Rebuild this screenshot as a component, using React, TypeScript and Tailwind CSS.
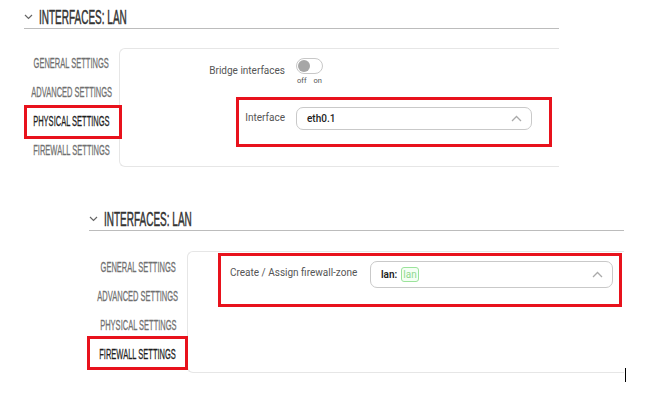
const condensed = { fontFamily: '"Liberation Sans", Arial, sans-serif' };

function Chevron() {
  return (
    <svg width="9" height="6" viewBox="0 0 9 6" className="shrink-0">
      <path d="M1 1l3.5 3.5L8 1" fill="none" stroke="#666" strokeWidth="1.2" />
    </svg>
  );
}

function CaretUp() {
  return (
    <svg width="11" height="7" viewBox="0 0 11 7">
      <path d="M1 6l4.5-4.5L10 6" fill="none" stroke="#aaa" strokeWidth="1.3" />
    </svg>
  );
}

function Title() {
  return (
    <div className="flex items-center gap-[6px] h-[23px] border-b border-[#bcbcbc]">
      <Chevron />
      <span
        className="inline-block origin-left scale-x-[0.5] text-[20px] leading-none text-[#333] whitespace-nowrap [-webkit-text-stroke:0.5px_#333]"
        style={condensed}
      >
        INTERFACES: LAN
      </span>
    </div>
  );
}

const tabs = ["GENERAL SETTINGS", "ADVANCED SETTINGS", "PHYSICAL SETTINGS", "FIREWALL SETTINGS"];

function SideTab({ label, active, boxClass }: { label: string; active: boolean; boxClass: string }) {
  return (
    <div className="relative h-[29px] flex items-center justify-center">
      <span
        className={`inline-block scale-x-[0.5] text-[15px] leading-none whitespace-nowrap ${
          active ? "text-[#1e1e1e] [-webkit-text-stroke:0.3px_#1e1e1e]" : "text-[#707070] [-webkit-text-stroke:0.3px_#707070]"
        }`}
        style={condensed}
      >
        {label}
      </span>
      {active && <div className={`absolute border-[3px] border-[#e8121c] ${boxClass}`} />}
    </div>
  );
}

function Select({ children, h }: { children: React.ReactNode; h: string }) {
  return (
    <div
      className={`flex items-center justify-between ${h} rounded-[7px] border border-[#c9c9c9] pl-[10px] pr-[9px]`}
    >
      <div className="flex items-center gap-[4px]">{children}</div>
      <CaretUp />
    </div>
  );
}

export default function App() {
  return (
    <div
      className="relative w-[659px] h-[393px] overflow-hidden bg-white"
      style={{ fontFamily: 'Roboto, "Open Sans", sans-serif' }}
    >
      {/* first screenshot */}
      <div className="ml-[24px] pt-[6px] w-[535px]">
        <Title />
        <div className="mt-[19px] flex">
          <div className="w-[95px] flex flex-col">
            {tabs.map((t) => (
              <SideTab key={t} label={t} active={t === "PHYSICAL SETTINGS"} boxClass="-top-[1px] -bottom-[4px] left-0 -right-[3px]" />
            ))}
          </div>
          <div className="flex-1 h-[119px] border border-r-0 border-[#e6e6e6] rounded-l-[6px] pt-[9px]">
            <div className="flex">
              <div className="w-[165px] pt-[8px] text-right text-[10px] leading-none text-[#555]">
                Bridge interfaces
              </div>
              <div className="ml-[11px] flex flex-col">
                <div className="w-[27px] h-[16px] rounded-full border border-[#c8c8c8] p-[1px]">
                  <div className="w-[12px] h-[12px] rounded-full bg-[#a6a6a6]" />
                </div>
                <div className="mt-[3px] flex gap-[7px] pl-[1px] text-[7.5px] leading-none text-[#555]">
                  <span>off</span>
                  <span>on</span>
                </div>
              </div>
            </div>
            <div className="ml-[116px] mt-[12px] w-[316px] h-[50px] border-[3px] border-[#e8121c] flex pt-[7px]">
              <div className="w-[46px] pt-[6px] text-right text-[10px] leading-none text-[#555]">Interface</div>
              <div className="ml-[11px] w-[236px]">
                <Select h="h-[23px]">
                  <span className="text-[10px] font-medium text-[#222]">eth0.1</span>
                </Select>
              </div>
            </div>
          </div>
        </div>
      </div>

      {/* second screenshot */}
      <div className="ml-[89px] mt-[41px] w-[535px]">
        <Title />
        <div className="mt-[20px] flex">
          <div className="w-[98px] flex flex-col pt-[1px]">
            {tabs.map((t) => (
              <SideTab key={t} label={t} active={t === "FIREWALL SETTINGS"} boxClass="-top-[3px] -bottom-[2px] -left-[2px] -right-[1px]" />
            ))}
          </div>
          <div className="flex-1 h-[122px] border border-r-0 border-[#e6e6e6] rounded-l-[6px] pt-[1px]">
            <div className="ml-[30px] w-[404px] h-[54px] border-[3px] border-[#e8121c] flex items-start pt-[5px]">
              <div className="pl-[9px] w-[149px] pt-[7px] text-[10px] leading-none text-[#555] whitespace-nowrap">
                Create / Assign firewall-zone
              </div>
              <div className="w-[243px]">
                <Select h="h-[27px]">
                  <span className="text-[10px] font-semibold text-[#222]">lan:</span>
                  <span className="px-[1px] rounded-[3px] border border-[#9be39b] bg-[#f4fff4] text-[10px] leading-[13px] text-[#8fd98f]">
                    lan
                  </span>
                </Select>
              </div>
            </div>
          </div>
        </div>
      </div>

      {/* text cursor */}
      <div className="absolute left-[625px] top-[368px] w-[1px] h-[14px] bg-black" />
    </div>
  );
}
